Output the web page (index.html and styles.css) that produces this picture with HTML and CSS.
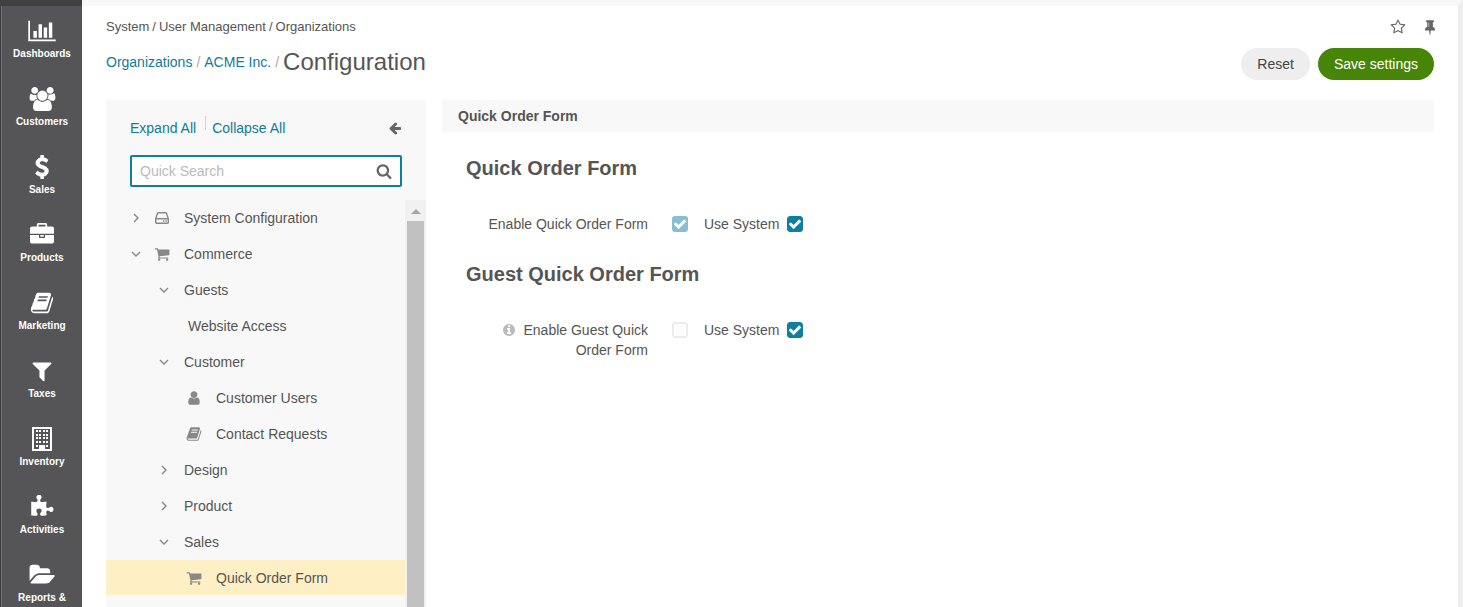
FILE: index.html
```html
<!DOCTYPE html>
<html lang="en">
<head>
<meta charset="utf-8">
<title>Configuration - Organizations</title>
<link rel="stylesheet" href="styles.css">
</head>
<body>
<svg class="sprite" aria-hidden="true">
  <symbol id="chart" viewBox="0 0 2048 1792"><path d="M640 896v512h-256v-512h256zm384-512v1024h-256v-1024h256zm1024 1152v128h-2048v-1536h128v1408h1920zm-640-896v768h-256v-768h256zm384-384v1152h-256v-1152h256z"/></symbol>
  <symbol id="users" viewBox="0 0 1984 1792"><path d="M657 896q-162 5-265 128h-134q-82 0-138-40.500t-56-118.500q0-353 124-353 6 0 43.500 21t97.500 42.500 119 21.500q67 0 133-23-5 37-5 66 0 159 90 294zm1071 637q0 120-73 189.500t-194 69.500h-874q-121 0-194-69.500t-73-189.500q0-53 3.500-103.500t14-109 26.500-108.500 43-97.500 62-81 85.500-53.500 111.500-20q10 0 43 21.500t73 48 107 48 135 21.500 135-21.500 107-48 73-48 43-21.500q61 0 111.500 20t85.500 53.500 62 81 43 97.500 26.500 108.500 14 109 3.500 103.500zm-1024-1277q0 106-75 181t-181 75-181-75-75-181 75-181 181-75 181 75 75 181zm704 384q0 159-112.500 271.500t-271.500 112.500-271.500-112.500-112.500-271.500 112.500-271.500 271.500-112.500 271.500 112.500 112.500 271.500zm576 225q0 78-56 118.500t-138 40.500h-134q-103-123-265-128 90-135 90-294 0-29-5-66 66 23 133 23 59 0 119-21.500t97.500-42.500 43.500-21q124 0 124 353zm-128-609q0 106-75 181t-181 75-181-75-75-181 75-181 181-75 181 75 75 181z"/></symbol>
  <symbol id="dollar" viewBox="0 0 1792 1792"><path stroke="currentColor" stroke-width="70" d="M1362 1185q0 153-99.500 263.500t-258.500 136.500v175q0 14-9 23t-23 9h-135q-13 0-22.500-9.500t-9.500-22.500v-175q-66-9-127.500-31t-101.500-44.500-74-48-46.500-37.500-17.500-18q-17-21-2-41l103-135q7-10 23-12 15-2 24 9l2 2q113 99 243 125 37 8 74 8 81 0 142.500-43t61.500-122q0-28-15-53t-33.500-42-58.500-37.500-66-32-80-32.500q-39-16-61.500-25t-61.500-26.500-62.500-31-56.500-35.500-53.500-42.500-43.500-49-35.500-58-21-66.500-8.500-78q0-138 98-242t255-134v-180q0-13 9.500-22.500t22.500-9.500h135q14 0 23 9t9 23v176q57 6 110.500 23t87 33.500 63.500 37.500 39 29 15 14q17 18 5 38l-81 146q-8 15-23 16-14 3-27-7-3-3-14.500-12t-39-26.500-58.500-32-74.500-26-85.500-11.500q-95 0-155 43t-60 111q0 26 8.500 48t29.500 41.500 39.500 33 56 31 60.500 27 70 27.500q53 20 81 31.500t76 35 75.500 42.500 62 50 53 63.500 31.500 76.500 13 94z"/></symbol>
  <symbol id="briefcase" viewBox="0 0 1792 1792"><path d="M640 256h512v-128h-512v128zm1152 640v480q0 66-47 113t-113 47h-1472q-66 0-113-47t-47-113v-480h672v160q0 26 19 45t45 19h320q26 0 45-19t19-45v-160h672zm-768 0v128h-256v-128h256zm768-480v384h-1792v-384q0-66 47-113t113-47h352v-160q0-40 28-68t68-28h576q40 0 68 28t28 68v160h352q66 0 113 47t47 113z"/></symbol>
  <symbol id="book" viewBox="0 0 1792 1792"><path d="M1703 478q40 57 18 129l-275 906q-19 64-76.500 107.500t-122.500 43.500h-923q-77 0-148.500-53.500t-99.500-131.500q-24-67-2-127 0-4 3-27t4-37q1-8-3-21.500t-3-19.500q2-11 8-21t16.500-23.500 16.500-23.500q23-38 45-91.500t30-91.500q3-10 .5-30t-.5-28q3-11 17-28t17-23q21-36 42-92t25-90q1-9-2.500-32t.5-28q4-13 22-30.500t22-22.500q19-26 42.500-84.500t27.500-96.500q1-8-3-25.500t-2-26.500q2-8 9-18t18-23 17-21q8-12 16.500-30.500t15-35 16-36 19.500-32 26.500-23.500 36-11.500 47.500 5.500l-1 3q38-9 51-9h761q74 0 114 56t18 130l-274 906q-36 119-71.500 153.500t-128.500 34.500h-869q-27 0-38 15-11 16-1 43 24 70 144 70h923q29 0 56-15.500t35-41.500l300-987q7-22 5-57 38 15 59 43zm-1064 2q-4 13 2 22.500t20 9.500h608q13 0 25.500-9.500t16.500-22.500l21-64q4-13-2-22.500t-20-9.500h-608q-13 0-25.500 9.500t-16.500 22.500zm-83 256q-4 13 2 22.500t20 9.500h608q13 0 25.500-9.500t16.500-22.500l21-64q4-13-2-22.500t-20-9.500h-608q-13 0-25.500 9.500t-16.500 22.500z"/></symbol>
  <symbol id="filter" viewBox="0 0 1792 1792"><path d="M1595 295q17 41-14 70l-493 493v742q0 42-39 59-13 5-25 5-27 0-45-19l-256-256q-19-19-19-45v-486l-493-493q-31-29-14-70 17-39 59-39h1280q42 0 59 39z"/></symbol>
  <symbol id="building" viewBox="0 0 24 24"><path fill-rule="evenodd" d="M2 0h20v24h-20zM4 2v20h5v-4h6v4h5v-20z"/><path d="M6 3h2v2h-2zM9 3h2v2h-2zM13 3h2v2h-2zM16 3h2v2h-2zM6 7h2v2h-2zM9 7h2v2h-2zM13 7h2v2h-2zM16 7h2v2h-2zM6 10h2v2h-2zM9 10h2v2h-2zM13 10h2v2h-2zM16 10h2v2h-2zM6 14h2v2h-2zM9 14h2v2h-2zM13 14h2v2h-2zM16 14h2v2h-2zM6 18h2v2h-2zM16 18h2v2h-2z"/></symbol>
  <symbol id="puzzle" viewBox="0 0 1792 1792"><path d="M1755 1083q0 81-44.500 135t-123.500 54q-41 0-77.500-17.500t-59-38-56.500-38-71-17.500q-110 0-110 124 0 39 16 115t15 115v5q-22 0-33 1-34 3-97.500 11.500t-115.500 13.500-98 5q-61 0-103-26.500t-42-83.500q0-37 17.500-71t38-56.500 38-59 17.500-77.500q0-79-54-123.500t-135-44.500q-84 0-143 45.500t-59 127.500q0 43 15 83t33.500 64.500 33.500 53 15 50.500q0 45-46 89-37 35-117 35-95 0-245-24-9-2-27.500-4t-27.500-4l-13-2q-1 0-3-1-2 0-2-1v-1024q2 1 17.500 3.500t34 5 21.500 3.500q150 24 245 24 80 0 117-35 46-44 46-89 0-22-15-50.500t-33.500-53-33.500-64.500-15-83q0-82 59-127.500t144-45.500q80 0 134 44.500t54 123.500q0 41-17.500 77.500t-38 59-38 56.500-17.500 71q0 57 42 83.500t103 26.500q64 0 180-15t163-17v2q-1 2-3.500 17.500t-5 34-3.500 21.500q-24 150-24 245 0 80 35 117 44 46 89 46 22 0 50.500-15t53-33.500 64.500-33.500 83-15q82 0 127.500 59t45.500 143z"/></symbol>
  <symbol id="folder" viewBox="0 0 1984 1792"><path d="M1943 952q0 31-31 66l-336 396q-43 51-120.500 86.500t-143.500 35.500h-1088q-34 0-60.500-13t-26.500-43q0-31 31-66l336-396q43-51 120.500-86.500t143.500-35.500h1088q34 0 60.500 13t26.500 43zm-343-344v160h-832q-94 0-197 47.500t-164 119.500l-337 396-5 6q0-4-.5-12.500t-.5-12.500v-960q0-92 66-158t158-66h320q92 0 158 66t66 158v32h544q92 0 158 66t66 158z"/></symbol>
  <symbol id="cart" viewBox="0 0 1792 1792"><path d="M704 1536q0 52-38 90t-90 38-90-38-38-90 38-90 90-38 90 38 38 90zm896 0q0 52-38 90t-90 38-90-38-38-90 38-90 90-38 90 38 38 90zm128-1088v512q0 24-16.500 42.500t-40.500 21.500l-1044 122q13 60 13 70 0 16-24 64h920q26 0 45 19t19 45-19 45-45 19h-1024q-26 0-45-19t-19-45q0-11 8-31.500t16-36 21.500-40 15.500-29.500l-177-823h-204q-26 0-45-19t-19-45 19-45 45-19h256q16 0 28.500 6.500t19.500 15.500 13 24.500 8 26 5.500 29.500 4.500 26h1201q26 0 45 19t19 45z"/></symbol>
  <symbol id="user" viewBox="0 0 1792 1792"><path d="M1536 1399q0 109-62.500 187t-150.500 78h-854q-88 0-150.500-78t-62.500-187q0-85 8.500-160.500t31.500-152 58.500-131 94-89 134.500-34.500q131 128 313 128t313-128q76 0 134.500 34.500t94 89 58.500 131 31.500 152 8.500 160.500zm-256-887q0 159-112.500 271.500t-271.500 112.500-271.500-112.500-112.500-271.500 112.500-271.500 271.500-112.500 271.500 112.500 112.500 271.500z"/></symbol>
  <symbol id="drive" viewBox="0 0 16 16"><path fill="none" stroke="currentColor" stroke-width="1.400" d="M1.700 8.700L3.500 3.300Q3.800 2.700 4.500 2.700H11.500Q12.200 2.700 12.500 3.300L14.300 8.700M1.700 8.700H14.300V12.600Q14.300 13.300 13.600 13.300H2.400Q1.700 13.300 1.700 12.600Z"/><path d="M9 10.300h1.400v1.400h-1.400zM11.400 10.300h1.400v1.400h-1.400z"/></symbol>
  <symbol id="star" viewBox="0 0 1792 1792"><path d="M1201 1004l306-297-422-62-189-382-189 382-422 62 306 297-73 421 378-199 377 199zm527-357q0 22-26 48l-363 354 86 500q1 7 1 20 0 50-41 50-19 0-40-12l-449-236-449 236q-22 12-40 12-21 0-31.500-14.500t-10.500-35.500q0-6 2-20l86-500-364-354q-25-27-25-48 0-37 56-46l502-73 225-455q19-41 49-41t49 41l225 455 502 73q56 9 56 46z"/></symbol>
  <symbol id="pin" viewBox="0 0 1792 1792"><path d="M800 864v-448q0-14-9-23t-23-9-23 9-9 23v448q0 14 9 23t23 9 23-9 9-23zm672 352q0 26-19 45t-45 19h-429l-51 483q-2 12-10.500 20.500t-20.500 8.500h-1q-27 0-32-27l-76-485h-404q-26 0-45-19t-19-45q0-123 78.500-221.500t177.500-98.500v-512q-52 0-90-38t-38-90 38-90 90-38h640q52 0 90 38t38 90-38 90-90 38v512q99 0 177.500 98.500t78.500 221.500z"/></symbol>
  <symbol id="search" viewBox="0 0 1792 1792"><path d="M1216 832q0-185-131.500-316.500t-316.500-131.500-316.500 131.500-131.500 316.500 131.500 316.500 316.500 131.500 316.500-131.500 131.500-316.500zm512 832q0 52-38 90t-90 38q-54 0-90-38l-343-342q-179 124-399 124-143 0-273.500-55.500t-225-150-150-225-55.500-273.500 55.500-273.500 150-225 225-150 273.500-55.500 273.500 55.500 225 150 150 225 55.500 273.500q0 220-124 399l343 343q37 37 37 90z"/></symbol>
  <symbol id="arrow" viewBox="0 0 1792 1792"><path d="M1664 896v128q0 53-32.500 90.500t-84.500 37.500h-704l293 294q38 36 38 90t-38 90l-75 76q-37 37-90 37-52 0-91-37l-651-652q-37-37-37-90 0-52 37-91l651-650q38-38 91-38 52 0 90 38l75 74q38 38 38 91t-38 91l-293 293h704q52 0 84.500 37.500t32.500 90.500z"/></symbol>
  <symbol id="check" viewBox="0 0 1792 1792"><path d="M1671 566q0 40-28 68l-724 724-136 136q-28 28-68 28t-68-28l-136-136-362-362q-28-28-28-68t28-68l136-136q28-28 68-28t68 28l294 295 656-657q28-28 68-28t68 28l136 136q28 28 28 68z"/></symbol>
  <symbol id="info" viewBox="0 0 1792 1792"><path d="M1152 1376v-160q0-14-9-23t-23-9h-96v-512q0-14-9-23t-23-9h-320q-14 0-23 9t-9 23v160q0 14 9 23t23 9h96v320h-96q-14 0-23 9t-9 23v160q0 14 9 23t23 9h448q14 0 23-9t9-23zm-128-896v-160q0-14-9-23t-23-9h-192q-14 0-23 9t-9 23v160q0 14 9 23t23 9h192q14 0 23-9t9-23zm640 416q0 209-103 385.500t-279.500 279.500-385.500 103-385.500-103-279.500-279.500-103-385.500 103-385.500 279.500-279.500 385.500-103 385.500 103 279.500 279.500 103 385.500z"/></symbol>
  <symbol id="right" viewBox="0 0 12 12"><path fill="none" stroke="currentColor" stroke-width="1.400" d="M4 2l4 4-4 4"/></symbol>
  <symbol id="down" viewBox="0 0 12 12"><path fill="none" stroke="currentColor" stroke-width="1.400" d="M2 4l4 4 4-4"/></symbol>
</svg>

<div class="app">
  <nav class="sidebar" aria-label="Main menu">
    <a class="nav-item" href="#"><svg class="nav-icon"><use href="#chart"/></svg><span>Dashboards</span></a>
    <a class="nav-item" href="#"><svg class="nav-icon"><use href="#users"/></svg><span>Customers</span></a>
    <a class="nav-item" href="#"><svg class="nav-icon"><use href="#dollar"/></svg><span>Sales</span></a>
    <a class="nav-item" href="#"><svg class="nav-icon"><use href="#briefcase"/></svg><span>Products</span></a>
    <a class="nav-item" href="#"><svg class="nav-icon"><use href="#book"/></svg><span>Marketing</span></a>
    <a class="nav-item" href="#"><svg class="nav-icon"><use href="#filter"/></svg><span>Taxes</span></a>
    <a class="nav-item" href="#"><svg class="nav-icon"><use href="#building"/></svg><span>Inventory</span></a>
    <a class="nav-item" href="#"><svg class="nav-icon"><use href="#puzzle"/></svg><span>Activities</span></a>
    <a class="nav-item" href="#"><svg class="nav-icon"><use href="#folder"/></svg><span>Reports &amp;</span></a>
  </nav>

  <main class="page">
    <header class="page-head">
      <div class="trail-row">
        <div class="trail"><span>System</span><span>/</span><span>User Management</span><span>/</span><span>Organizations</span></div>
        <div class="page-tools">
          <button class="icon-button" type="button" aria-label="Add to favorites"><svg class="icon"><use href="#star"/></svg></button>
          <button class="icon-button" type="button" aria-label="Pin page"><svg class="icon"><use href="#pin"/></svg></button>
        </div>
      </div>
      <div class="title-row">
        <div class="title-path">
          <a href="#">Organizations</a><span class="slash">/</span><a href="#">ACME Inc.</a><span class="slash">/</span>
          <h1 class="title">Configuration</h1>
        </div>
        <div class="actions">
          <button class="button" type="button">Reset</button>
          <button class="button button-primary" type="submit" form="settings">Save settings</button>
        </div>
      </div>
    </header>

    <div class="columns">
      <aside class="tree-panel">
        <div class="tree-head">
          <div class="tree-actions">
            <a href="#">Expand All</a>
            <span class="divider"></span>
            <a href="#">Collapse All</a>
            <button class="icon-button collapse" type="button" aria-label="Hide panel"><svg class="icon"><use href="#arrow"/></svg></button>
          </div>
          <div class="search">
            <input class="search-input" type="text" placeholder="Quick Search" aria-label="Quick Search">
            <button class="icon-button" type="button" aria-label="Search"><svg class="icon"><use href="#search"/></svg></button>
          </div>
        </div>
        <div class="tree-body">
          <ul class="tree">
            <li><a class="node level-1" href="#"><svg class="chevron"><use href="#right"/></svg><svg class="node-icon"><use href="#drive"/></svg>System Configuration</a></li>
            <li><a class="node level-1" href="#"><svg class="chevron"><use href="#down"/></svg><svg class="node-icon"><use href="#cart"/></svg>Commerce</a></li>
            <li><a class="node level-2" href="#"><svg class="chevron"><use href="#down"/></svg>Guests</a></li>
            <li><a class="node plain" href="#">Website Access</a></li>
            <li><a class="node level-2" href="#"><svg class="chevron"><use href="#down"/></svg>Customer</a></li>
            <li><a class="node level-3" href="#"><svg class="node-icon"><use href="#user"/></svg>Customer Users</a></li>
            <li><a class="node level-3" href="#"><svg class="node-icon"><use href="#book"/></svg>Contact Requests</a></li>
            <li><a class="node level-2" href="#"><svg class="chevron"><use href="#right"/></svg>Design</a></li>
            <li><a class="node level-2" href="#"><svg class="chevron"><use href="#right"/></svg>Product</a></li>
            <li><a class="node level-2" href="#"><svg class="chevron"><use href="#down"/></svg>Sales</a></li>
            <li><a class="node level-3 selected" href="#" aria-current="page"><svg class="node-icon"><use href="#cart"/></svg>Quick Order Form</a></li>
          </ul>
          <div class="scrollbar" aria-hidden="true"><span class="scroll-arrow"></span><span class="scroll-thumb"></span></div>
        </div>
      </aside>

      <form class="settings" id="settings">
        <div class="settings-bar">Quick Order Form</div>
        <section class="group">
          <h2 class="group-title">Quick Order Form</h2>
          <div class="field">
            <label class="field-label" for="enable">Enable Quick Order Form</label>
            <span class="box"><input type="checkbox" id="enable" checked disabled><svg class="tick"><use href="#check"/></svg></span>
            <label class="system" for="enable-system">Use System</label>
            <span class="box"><input type="checkbox" id="enable-system" checked><svg class="tick"><use href="#check"/></svg></span>
          </div>
        </section>
        <section class="group">
          <h2 class="group-title">Guest Quick Order Form</h2>
          <div class="field">
            <label class="field-label" for="guest"><svg class="info"><use href="#info"/></svg>Enable Guest Quick Order Form</label>
            <span class="box"><input type="checkbox" id="guest" disabled></span>
            <label class="system" for="guest-system">Use System</label>
            <span class="box"><input type="checkbox" id="guest-system" checked><svg class="tick"><use href="#check"/></svg></span>
          </div>
        </section>
      </form>
    </div>
  </main>
</div>
</body>
</html>
```
FILE: styles.css
```css
* {
  box-sizing: border-box;
}

body {
  margin: 0;
  color: #555;
  background: #fff;
  font: 14px/20px "Liberation Sans", Arial, sans-serif;
}

a {
  color: #0f7b9c;
  text-decoration: none;
}

button {
  font: inherit;
  cursor: pointer;
}

h1,
h2,
ul {
  margin: 0;
  padding: 0;
}

svg {
  display: block;
  flex: none;
  fill: currentColor;
}

.sprite {
  display: none;
}

.app {
  display: flex;
  height: 100vh;
  overflow: hidden;
}

.sidebar {
  flex: none;
  width: 82px;
  overflow: hidden;
  border-top: 6px solid #404041;
  background: linear-gradient(90deg, #3a3c42 0 1px, #3a80b4 1px 2px, #555557 2px);
}

.nav-item {
  display: flex;
  flex-direction: column;
  align-items: center;
  gap: 3px;
  height: 68px;
  padding: 13px 0 12px 2px;
  color: #fff;
  font-size: 10px;
  font-weight: bold;
  line-height: 16px;
}

.nav-icon {
  width: 28px;
  height: 24px;
}

.page {
  display: flex;
  flex: 1;
  flex-direction: column;
  min-width: 0;
  padding: 0 24px;
  border-top: 6px solid #f8f8f8;
  border-right: 5px solid #eee;
}

.trail-row,
.title-row {
  display: flex;
  justify-content: space-between;
}

.trail-row {
  align-items: center;
  height: 42px;
}

.trail {
  display: flex;
  gap: 3px;
  font-size: 13px;
}

.page-tools {
  display: flex;
  gap: 16px;
  margin-right: -4px;
}

.icon-button {
  padding: 0;
  border: 0;
  color: #666;
  background: none;
}

.icon {
  width: 16px;
  height: 16px;
}

.title-row {
  height: 32px;
}

.title-path {
  display: flex;
  gap: 4px;
  align-items: center;
  height: 28px;
}

.slash {
  color: #aaa;
}

.title {
  font-size: 24px;
  font-weight: normal;
  line-height: 28px;
}

.actions {
  display: flex;
  gap: 8px;
}

.button {
  height: 32px;
  padding: 0 16px;
  border: 0;
  border-radius: 16px;
  color: #444;
  background: #eee;
}

.button-primary {
  color: #fff;
  background: #468508;
}

.columns {
  display: flex;
  flex: 1;
  gap: 16px;
  min-height: 0;
  padding-top: 20px;
}

.tree-panel {
  display: flex;
  flex: none;
  flex-direction: column;
  width: 320px;
  border-radius: 4px 4px 0 0;
  background: #f8f8f8;
}

.tree-head {
  padding: 16px 24px 13px;
}

.tree-actions {
  display: flex;
  align-items: center;
  height: 24px;
  margin-bottom: 15px;
}

.divider {
  align-self: flex-start;
  width: 1px;
  height: 14px;
  margin: 0 6px 0 9px;
  background: #d5d5d5;
}

.collapse {
  margin-left: auto;
}

.collapse .icon {
  width: 14px;
}

.search {
  display: flex;
  align-items: center;
  height: 32px;
  padding: 0 8px;
  border: 2px solid #0f7f9f;
  border-radius: 2px;
  background: #fff;
}

.search-input {
  flex: 1;
  min-width: 0;
  padding: 0;
  border: 0;
  outline: 0;
  color: #555;
  background: none;
  font: inherit;
}

.search-input::placeholder {
  color: #bbb;
}

.tree-body {
  display: flex;
  flex: 1;
  min-height: 0;
}

.tree {
  flex: 1;
  overflow: hidden;
  list-style: none;
}

.node {
  display: flex;
  align-items: center;
  height: 35px;
  margin-bottom: 1px;
  color: #555;
}

.level-1 {
  padding-left: 24px;
}

.level-2 {
  padding-left: 52px;
}

.level-3 {
  padding-left: 80px;
}

.plain {
  padding-left: 82px;
}

.selected {
  background: #ffefc5;
}

.chevron {
  width: 12px;
  height: 12px;
  margin-right: 14px;
  color: #888;
}

.level-1 .chevron {
  margin-right: 12px;
}

.node-icon {
  width: 16px;
  height: 16px;
  margin-right: 14px;
  color: #888;
}

.scrollbar {
  display: flex;
  flex: none;
  flex-direction: column;
  align-items: center;
  width: 21px;
  background: #f1f1f1;
}

.scroll-arrow {
  margin: 9px 0 7px;
  border: 5px solid transparent;
  border-top: 0;
  border-bottom-color: #a3a3a3;
}

.scroll-thumb {
  flex: 1;
  width: 17px;
  background: #c1c1c1;
}

.settings {
  flex: 1;
  min-width: 0;
}

.settings-bar {
  padding: 6px 16px;
  border-radius: 4px;
  background: #f8f8f8;
  font-weight: bold;
}

.group {
  padding: 24px 24px 4px;
}

.group-title {
  margin-bottom: 34px;
  font-size: 20px;
  line-height: 24px;
}

.field {
  display: flex;
  align-items: flex-start;
}

.field-label {
  width: 182px;
  margin-right: 24px;
  text-align: right;
}

.info {
  display: inline-block;
  width: 14px;
  height: 14px;
  margin-right: 7px;
  color: #bbb;
  vertical-align: -2px;
}

.box {
  display: grid;
  width: 16px;
  height: 16px;
  margin-top: 2px;
}

.box > * {
  grid-area: 1 / 1;
}

.box input {
  width: 16px;
  height: 16px;
  margin: 0;
  border: 1px solid #ccc;
  border-radius: 3px;
  appearance: none;
  background: #fcfcfc;
}

.box input:checked {
  border-color: #0f7f9f;
  background: #0f7f9f;
}

.box input:disabled {
  border: 2px solid #ececec;
}

.box input:checked:disabled {
  border-color: #87bfd0;
  background: #87bfd0;
}

.tick {
  place-self: center;
  width: 14px;
  height: 14px;
  color: #fff;
  pointer-events: none;
}

.system {
  margin: 0 8px 0 16px;
}
```
